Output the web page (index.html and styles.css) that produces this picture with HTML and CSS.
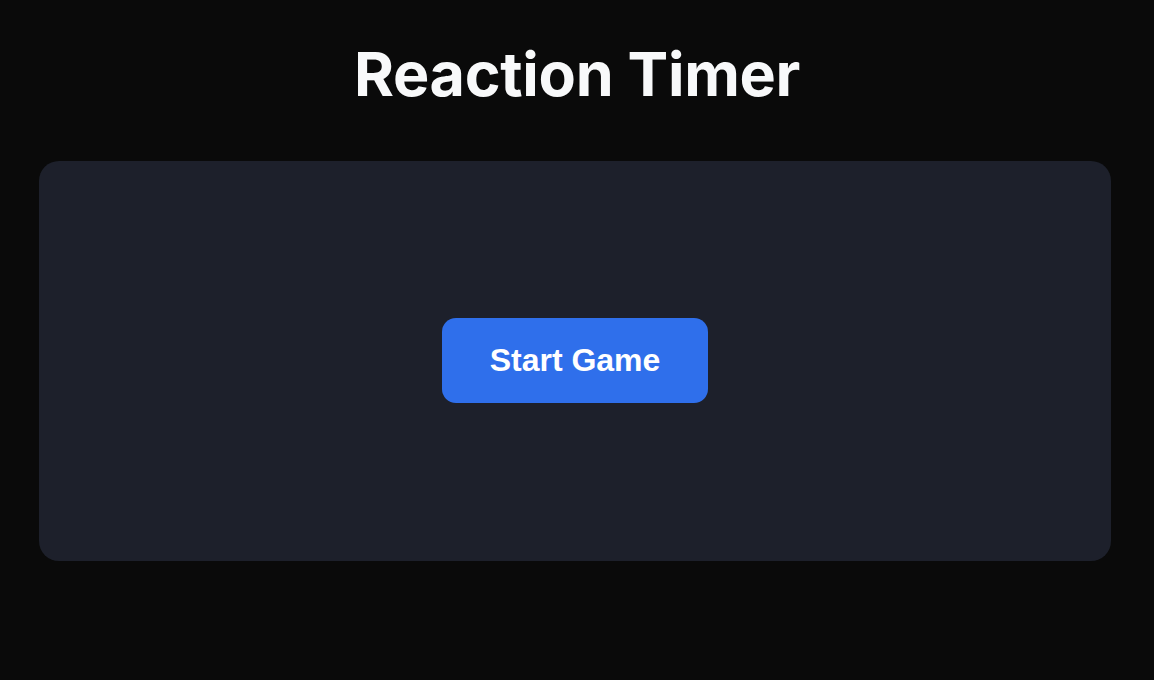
FILE: index.html
```html
<!DOCTYPE html>
<html lang="en">
<head>
<meta charset="utf-8">
<title>Reaction Timer</title>
<link rel="stylesheet" href="styles.css">
</head>
<body>
<main class="app">
  <h1 class="title">Reaction Timer</h1>
  <section class="panel">
    <button class="start-btn" type="button">Start Game</button>
  </section>
</main>
</body>
</html>
```
FILE: styles.css
```css
html, body {
  margin: 0;
  padding: 0;
  background: #0a0a0a;
  height: 100%;
}
.app {
  display: flex;
  flex-direction: column;
  align-items: flex-start;
  padding: 34px 0 0 39px;
  font-family: Inter, "Liberation Sans", sans-serif;
}
.title {
  align-self: stretch;
  margin: 0 39px 0 0;
  text-align: center;
  color: #f8f9fa;
  font-family: Inter, sans-serif;
  font-weight: 700;
  font-size: 61px;
  line-height: 80px;
  letter-spacing: -0.3px;
}
.panel {
  margin-top: 47px;
  width: 1072px;
  height: 400px;
  box-sizing: border-box;
  padding-bottom: 2px;
  background: #1d202b;
  border-radius: 20px;
  display: flex;
  align-items: center;
  justify-content: center;
}
.start-btn {
  width: 266px;
  height: 85px;
  border: none;
  border-radius: 14px;
  background: #2f6feb;
  color: #ffffff;
  font-family: "Liberation Sans", Arial, sans-serif;
  font-weight: 700;
  font-size: 32px;
  cursor: pointer;
}
```
